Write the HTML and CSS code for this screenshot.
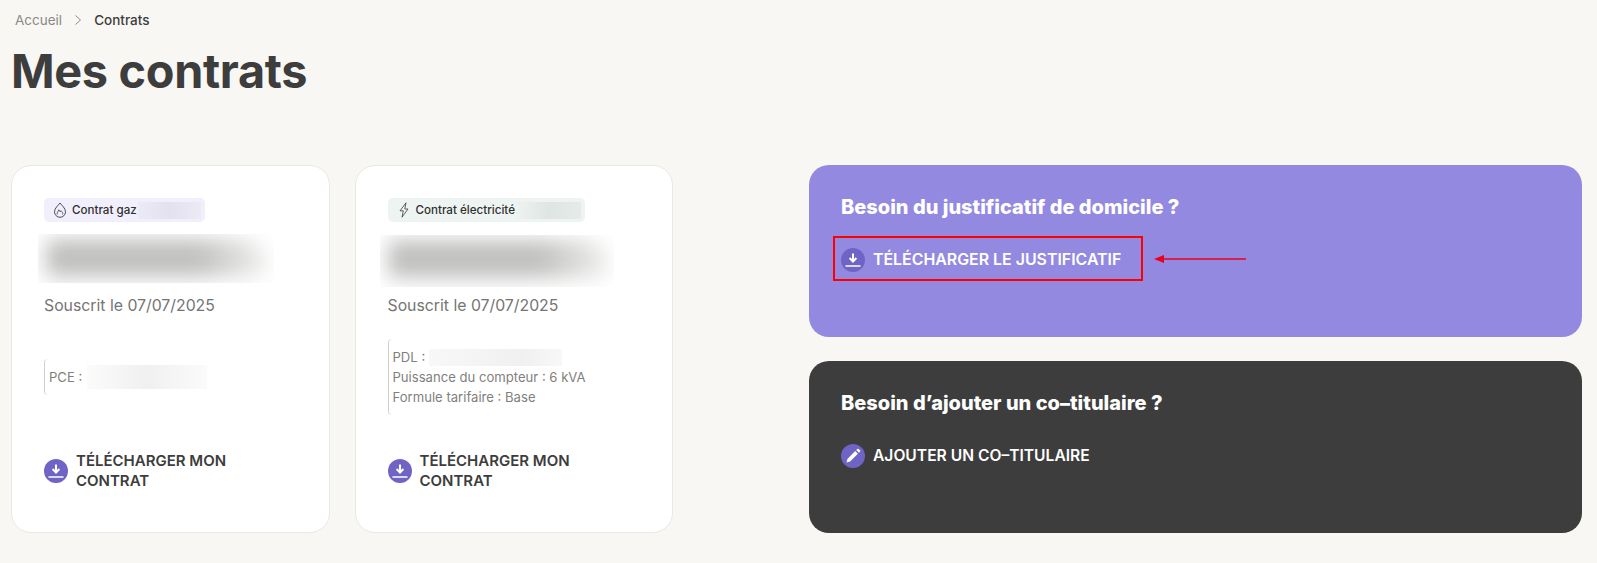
FILE: index.html
```html
<!DOCTYPE html>
<html lang="fr">
<head>
<meta charset="utf-8">
<title>Mes contrats</title>
<link rel="stylesheet" href="styles.css">
</head>
<body>
<main class="page">
  <nav class="crumbs">
    <span class="crumb-link">Accueil</span>
    <svg class="crumb-sep" width="8" height="12" viewBox="0 0 8 12"><path d="M1.5 1.5 6.5 6l-5 4.500" fill="none" stroke="#8a8a88" stroke-width="1"/></svg>
    <span class="crumb-current">Contrats</span>
  </nav>
  <h1 class="title">Mes contrats</h1>
  <div class="layout">
    <section class="cards">
      <article class="card">
        <div class="chip chip-gas">
          <svg class="chip-icon" width="14" height="16" viewBox="0 0 14 16"><path d="M7 1C5.500 3.200 1.500 6 1.500 9.800a5.500 5.500 0 0 0 11 0C12.500 6 8.500 3.200 7 1Z" fill="none" stroke="#3c3d3c" stroke-width=".9"/><path d="M4.300 12.500C3.500 10.500 5.300 9.800 5.800 7.800c1 .6 1.200 1.500 1.300 2.100.5-.3.800-.8.900-1.200 1.400 1.300 2.200 2.600 1.500 3.800" fill="none" stroke="#3c3d3c" stroke-width=".8"/></svg>
          <span>Contrat gaz</span>
          <span class="chip-mask mask-gas"></span>
        </div>
        <div class="smudge smudge-one"><div class="smudge-ink"></div></div>
        <p class="date">Souscrit le 07/07/2025</p>
        <div class="details-slot">
          <div class="details">
            <div class="detail-row">PCE : <span class="value-mask mask-pce"></span></div>
          </div>
        </div>
        <a class="action action-dark">
          <svg class="action-icon" width="24" height="24" viewBox="0 0 24 24"><circle cx="12" cy="12" r="12" fill="#6f63c6"/><path d="M12 5.500v7.500M8.600 10l3.400 3.500 3.400-3.500" fill="none" stroke="#fff" stroke-width="2"/><path d="M4.500 18h15" stroke="#fff" stroke-width="1.500"/></svg>
          <span>TÉLÉCHARGER MON CONTRAT</span>
        </a>
      </article>
      <article class="card">
        <div class="chip chip-elec">
          <svg class="chip-icon" width="14" height="16" viewBox="0 0 14 16"><path d="M9 .8 3 8.800h3.300L5 15.200l6-8.200H7.800L9 .8Z" fill="none" stroke="#3c3d3c" stroke-width=".8"/></svg>
          <span>Contrat électricité</span>
          <span class="chip-mask mask-elec"></span>
        </div>
        <div class="smudge smudge-two"><div class="smudge-ink"></div></div>
        <p class="date date-two">Souscrit le 07/07/2025</p>
        <div class="details-slot">
          <div class="details">
            <div class="detail-row">PDL : <span class="value-mask mask-pdl"></span></div>
            <div class="detail-row">Puissance du compteur : 6 kVA</div>
            <div class="detail-row">Formule tarifaire : Base</div>
          </div>
        </div>
        <a class="action action-dark">
          <svg class="action-icon" width="24" height="24" viewBox="0 0 24 24"><circle cx="12" cy="12" r="12" fill="#6f63c6"/><path d="M12 5.500v7.500M8.600 10l3.400 3.500 3.400-3.500" fill="none" stroke="#fff" stroke-width="2"/><path d="M4.500 18h15" stroke="#fff" stroke-width="1.500"/></svg>
          <span>TÉLÉCHARGER MON CONTRAT</span>
        </a>
      </article>
    </section>
    <section class="side">
      <article class="panel panel-purple">
        <h2 class="panel-title">Besoin du justificatif de domicile ?</h2>
        <a class="action action-light action-wide">
          <svg class="action-icon" width="24" height="24" viewBox="0 0 24 24"><circle cx="12" cy="12" r="12" fill="#6f63c6"/><path d="M12 5.500v7.500M8.600 10l3.400 3.500 3.400-3.500" fill="none" stroke="#fff" stroke-width="2"/><path d="M4.500 18h15" stroke="#fff" stroke-width="1.500"/></svg>
          <span>TÉLÉCHARGER LE JUSTIFICATIF</span>
        </a>
        <div class="mark-box"></div>
        <svg class="mark-arrow" width="92" height="10" viewBox="0 0 92 10"><path d="M92 5H8" stroke="#e8001c" stroke-width="1.500"/><path d="M0 5l10-4v8z" fill="#e8001c"/></svg>
      </article>
      <article class="panel panel-dark">
        <h2 class="panel-title">Besoin d’ajouter un co–titulaire ?</h2>
        <a class="action action-light action-narrow">
          <svg class="action-icon" width="24" height="24" viewBox="0 0 24 24"><circle cx="12" cy="12" r="12" fill="#6f63c6"/><path d="M5.500 18.500l.9-3.600 7.800-7.800 2.700 2.700-7.800 7.800-3.600.9ZM15.200 6.100l1.100-1.100a1 1 0 0 1 1.400 0l1.300 1.300a1 1 0 0 1 0 1.400l-1.100 1.100-2.700-2.700Z" fill="#fff"/></svg>
          <span>AJOUTER UN CO–TITULAIRE</span>
        </a>
      </article>
    </section>
  </div>
</main>
</body>
</html>
```
FILE: styles.css
```css
* { box-sizing: border-box; }
html, body { margin: 0; height: 100%; }
body {
  background: #f8f7f3;
  color: #3c3d3c;
  font-family: "Inter", "Liberation Sans", sans-serif;
  overflow: hidden;
}
.page { padding: 12px 15px 0 11px; }
.crumbs {
  display: flex;
  align-items: center;
  gap: 12px;
  height: 16px;
  padding-left: 4px;
  font-size: 13.500px;
}
.crumb-link { color: #8a8a88; }
.crumb-current { font-weight: 500; }
.title {
  margin: 15px 0 0;
  font-size: 46.800px;
  line-height: 56px;
  font-weight: 700;
  letter-spacing: -0.3px;
}
.layout {
  display: flex;
  justify-content: space-between;
  margin-top: 66px;
}
.cards { display: flex; gap: 25px; }
.card {
  display: flex;
  flex-direction: column;
  width: 318.500px;
  height: 368px;
  padding: 32px 32px 41px;
  background: #fff;
  border: 1px solid #e9e8e4;
  border-radius: 20px;
}
.chip {
  display: flex;
  align-items: center;
  align-self: flex-start;
  height: 24px;
  padding: 0 4px 0 9px;
  border-radius: 5px;
  font-size: 11.600px;
  font-weight: 500;
  color: #2f302f;
}
.chip-gas { background: #f1effb; }
.chip-elec { background: #eef4f2; }
.chip-icon { margin-right: 5px; }
.chip-mask { display: block; height: 17px; margin-left: 1px; }
.mask-gas { width: 63px; background: linear-gradient(90deg, #eceaf5, #e3e1ee 50%, #eceaf5); }
.mask-elec { width: 65px; background: linear-gradient(90deg, #eef3f1, #dfe5e2 50%, #e6ebe9); }
.smudge {
  position: relative;
  overflow: hidden;
  width: 236px;
  margin-left: -6px;
  background: #fff;
}
.smudge-one { height: 49px; margin-top: 12px; }
.smudge-two { width: 234px; height: 52px; margin-top: 13px; margin-left: -8px; }
.smudge-ink {
  position: absolute;
  left: 8px;
  top: 5px;
  width: 222px;
  height: 38px;
  border-radius: 10px 60px 30px 10px;
  background: linear-gradient(90deg, #c0c1bf 68%, #f1f1f0);
  filter: blur(10px);
}
.date {
  margin: 13px 0 0;
  font-size: 15.800px;
  line-height: 20px;
  color: #757574;
}
.date-two { margin-top: 9px; }
.details-slot {
  flex: 1;
  display: flex;
  align-items: center;
  padding-bottom: 13px;
}
.details {
  padding: 8px 0 8px 4px;
  border-left: 1px solid #cfcfcc;
  border-radius: 4px 0 0 4px;
  font-size: 13.100px;
  line-height: 20px;
  color: #7f7f7d;
}
.detail-row { display: flex; align-items: center; white-space: pre; }
.value-mask { display: block; height: 24px; margin: -2px 0; }
.mask-pce { width: 120px; margin-left: 1px; background: linear-gradient(90deg, #fbfbfb, #f0f0f0 50%, #fbfbfb); }
.mask-pdl { width: 133px; background: linear-gradient(90deg, #f8f8f8, #f0f0f0 70%, #f8f8f8); height: 17px; }
.action {
  display: flex;
  align-items: center;
  gap: 8px;
  font-size: 15px;
  line-height: 20px;
  font-weight: 600;
}
.action-icon { flex: none; }
.action-dark { color: #3c3d3c; }
.action-light { color: #fff; margin-top: 28px; }
.action-wide { font-size: 15.900px; }
.action-narrow { font-size: 15.600px; }
.side {
  display: flex;
  flex-direction: column;
  gap: 24px;
  width: 773px;
}
.panel {
  position: relative;
  flex: 1;
  padding: 29px 32px 0;
  border-radius: 20px;
  color: #fff;
}
.panel-purple { background: #9489e0; }
.panel-dark { background: #3c3d3c; }
.panel-title {
  margin: 0;
  font-size: 20px;
  line-height: 26px;
  font-weight: 800;
}
.mark-box {
  position: absolute;
  left: 24px;
  top: 71px;
  width: 310px;
  height: 45px;
  border: 2px solid #f00;
}
.mark-arrow {
  position: absolute;
  left: 345px;
  top: 89px;
}
```
